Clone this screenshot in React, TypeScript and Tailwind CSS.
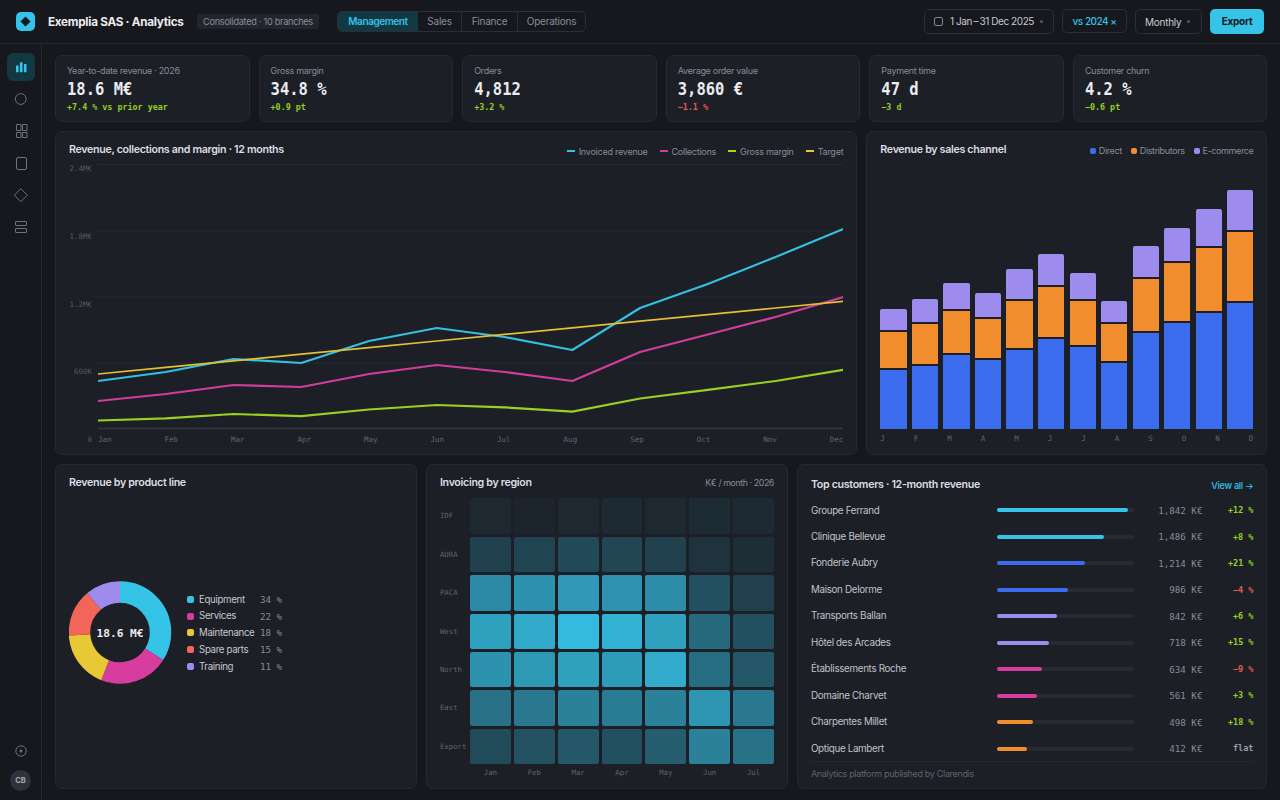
import type { ReactNode } from "react";

const sans = "whitespace-nowrap leading-none";
const mono = "font-['DejaVu_Sans_Mono',monospace] whitespace-nowrap leading-none";

const kpis = [
    { label: "Year-to-date revenue · 2026", value: "18.6 M€", delta: "+7.4 % vs prior year", up: true },
    { label: "Gross margin", value: "34.8 %", delta: "+0.9 pt", up: true },
    { label: "Orders", value: "4,812", delta: "+3.2 %", up: true },
    { label: "Average order value", value: "3,860 €", delta: "−1.1 %", up: false },
    { label: "Payment time", value: "47 d", delta: "−3 d", up: true },
    { label: "Customer churn", value: "4.2 %", delta: "−0.6 pt", up: true },
];

const months = ["Jan", "Feb", "Mar", "Apr", "May", "Jun", "Jul", "Aug", "Sep", "Oct", "Nov", "Dec"];

const series = [
    { name: "Invoiced revenue", color: "#35bfe0", dot: "bg-[#35c3e8]", width: 2.2, values: [48, 57, 70, 66, 88, 101, 92, 79, 121, 145, 172, 200] },
    { name: "Collections", color: "#d03d9b", dot: "bg-[#d63d9f]", width: 2.2, values: [28, 35, 44, 42, 55, 64, 57, 48, 77, 94.5, 112, 132] },
    { name: "Gross margin", color: "#9bcf24", dot: "bg-[#9ed81f]", width: 2.2, values: [8.5, 10.7, 15, 12.8, 19.5, 24, 21.7, 17.3, 30.5, 39.2, 48, 59.2] },
    { name: "Target", color: "#e2bf35", dot: "bg-[#e8c835]", width: 1.7, values: [55, 61.6, 68.2, 74.8, 81.4, 88, 94.6, 101.2, 107.8, 114.4, 121, 127.6] },
];

// [direct, distributors, e-commerce]
const channels = [
    [59.7, 38.3, 21.7],
    [64.3, 41.7, 24],
    [74.7, 44, 27.3],
    [70, 40.7, 25],
    [80.3, 48.7, 30.7],
    [90.7, 52.3, 31.7],
    [82.7, 46.3, 27],
    [66.7, 39.3, 21.7],
    [96.7, 54, 32],
    [107, 59.7, 34.3],
    [117, 65, 38.3],
    [127.3, 70.7, 40.7],
];

const products = [
    { name: "Equipment", share: 34, color: "#35c3e8", dot: "bg-[#35c3e8]" },
    { name: "Services", share: 22, color: "#d63d9f", dot: "bg-[#d63d9f]" },
    { name: "Maintenance", share: 18, color: "#e8c835", dot: "bg-[#e8c835]" },
    { name: "Spare parts", share: 15, color: "#f26659", dot: "bg-[#f26659]" },
    { name: "Training", share: 11, color: "#9d8cee", dot: "bg-[#9d8cee]" },
];

const regions = [
    { name: "IDF", values: [0.06, 0.04, 0.06, 0.07, 0.06, 0.08, 0.07] },
    { name: "AURA", values: [0.21, 0.23, 0.26, 0.24, 0.21, 0.12, 0.09] },
    { name: "PACA", values: [0.66, 0.7, 0.75, 0.71, 0.67, 0.3, 0.2] },
    { name: "West", values: [0.79, 0.85, 0.95, 0.9, 0.79, 0.45, 0.3] },
    { name: "North", values: [0.7, 0.74, 0.79, 0.76, 0.86, 0.48, 0.34] },
    { name: "East", values: [0.5, 0.54, 0.6, 0.57, 0.6, 0.72, 0.54] },
    { name: "Export", values: [0.27, 0.31, 0.34, 0.3, 0.38, 0.6, 0.5] },
];

const customers = [
    { name: "Groupe Ferrand", fill: 96, bar: "bg-[#35c3e8]", value: "1,842 K€", delta: "+12 %" },
    { name: "Clinique Bellevue", fill: 78, bar: "bg-[#35c3e8]", value: "1,486 K€", delta: "+8 %" },
    { name: "Fonderie Aubry", fill: 64, bar: "bg-[#3b6cee]", value: "1,214 K€", delta: "+21 %" },
    { name: "Maison Delorme", fill: 52, bar: "bg-[#3b6cee]", value: "986 K€", delta: "−4 %" },
    { name: "Transports Ballan", fill: 44, bar: "bg-[#9d8cee]", value: "842 K€", delta: "+6 %" },
    { name: "Hôtel des Arcades", fill: 38, bar: "bg-[#9d8cee]", value: "718 K€", delta: "+15 %" },
    { name: "Établissements Roche", fill: 33, bar: "bg-[#d63d9f]", value: "634 K€", delta: "−9 %" },
    { name: "Domaine Charvet", fill: 29, bar: "bg-[#d63d9f]", value: "561 K€", delta: "+3 %" },
    { name: "Charpentes Millet", fill: 26, bar: "bg-[#f18d2d]", value: "498 K€", delta: "+18 %" },
    { name: "Optique Lambert", fill: 22, bar: "bg-[#f18d2d]", value: "412 K€", delta: "flat" },
];

function deltaColor(delta: string) {
    if (delta.startsWith("+")) return "text-[#93cf22]";
    if (delta.startsWith("−")) return "text-[#e8594f]";
    return "text-[#9a9ca5]";
}

function Card({ className, children }: { className: string; children: ReactNode }) {
    return (
        <section className={`min-w-0 rounded-[7px] border border-[#262932] bg-[#1c1f26] ${className}`}>
            {children}
        </section>
    );
}

function Title({ children }: { children: ReactNode }) {
    return <h2 className={`${sans} text-[10.7px] font-semibold tracking-[-0.33px] text-[#dcdde2]`}>{children}</h2>;
}

function Header() {
    return (
        <header className="flex h-11 shrink-0 items-center border-b border-[#26282f] px-4 pb-px">
            <div className="flex h-[19px] w-[19px] items-center justify-center rounded-[5px] bg-[#35c3e8]">
                <svg className="h-[11px] w-[11px]" viewBox="0 0 11 11">
                    <path d="M5.5 0.5L10.5 5.5L5.5 10.5L0.5 5.5Z" fill="#15171c" />
                </svg>
            </div>
            <h1 className={`${sans} ml-[13px] w-[137px] pt-[3px] text-[11.7px] font-bold tracking-[-0.26px] text-[#ececf0]`}>Exemplia SAS · Analytics</h1>
            <div className="ml-3 flex h-[15px] w-[122px] items-center justify-center rounded-[3px] bg-[#22252d] pt-px">
                <span className={`${sans} text-[9.2px] tracking-[-0.3px] text-[#898c96]`}>Consolidated · 10 branches</span>
            </div>
            <nav className="ml-[18px] flex h-[21px] overflow-hidden rounded-[5px] border border-[#2b2e36] text-[10px] tracking-[-0.25px] text-[#898c96]">
                <span className={`${sans} flex w-20 items-center justify-center bg-[#123842] font-semibold tracking-[-0.42px] text-[#35c3e8]`}>Management</span>
                <span className={`${sans} flex w-[43px] items-center justify-center`}>Sales</span>
                <span className={`${sans} flex w-14 items-center justify-center border-l border-[#2b2e36]`}>Finance</span>
                <span className={`${sans} flex w-[68px] items-center justify-center border-l border-[#2b2e36]`}>Operations</span>
            </nav>
            <div className="ml-auto flex items-center gap-2 text-[10px] tracking-[-0.25px] text-[#c6c8cf]">
                <div className="flex h-[25px] w-[130px] items-center rounded-[5px] border border-[#2b2e36] pl-[9px]">
                    <span className="h-[9px] w-[9px] rounded-[2px] border border-[#85878f]" />
                    <span className={`${sans} ml-[7px] w-[85px] tracking-[-0.42px]`}>{"1 Jan\u2009–\u200931 Dec 2025"}</span>
                    <span className="ml-[5px] h-[3px] w-[3px] rounded-full bg-[#565963]" />
                </div>
                <div className={`${sans} flex h-6 w-[65px] items-center justify-center rounded-[5px] border border-[#2b2e36] font-medium tracking-[-0.5px] text-[#35c3e8]`}>vs 2024 ×</div>
                <div className="flex h-[25px] w-[67px] items-center rounded-[5px] border border-[#2b2e36] pl-[9px]">
                    <span className={`${sans} pt-px`}>Monthly</span>
                    <span className="ml-[6px] h-[3px] w-[3px] rounded-full bg-[#565963]" />
                </div>
                <button className={`${sans} h-[25px] w-[54px] rounded-[5px] bg-[#35c3e8] font-bold text-[#10161b]`}>Export</button>
            </div>
        </header>
    );
}

function Sidebar() {
    return (
        <aside className="flex w-[42px] shrink-0 flex-col items-center border-r border-[#26282f] pt-[9px] pb-[9px]">
            <div className="flex h-7 w-7 items-center justify-center rounded-md bg-[#123842]">
                <svg className="h-3 w-3" viewBox="0 0 12 12" fill="#35c3e8">
                    <path d="M1 4.5h2.6v6.7H1zM4.9 1.2h2.6v10H4.9zM8.9 3h2.6v8.2H8.9z" />
                </svg>
            </div>
            <svg className="mt-1 h-40 w-7" viewBox="0 0 28 160" fill="none" stroke="#6e717a" strokeWidth="1">
                <circle cx="13.8" cy="14" r="5.4" />
                <path d="M9.5 39.5h4.5v6h-4.5zM15.5 39.5h4.5v6h-4.5zM9.5 47.5h4.5v5h-4.5zM15.5 47.5h4.5v5h-4.5z" />
                <rect x="9.5" y="72.5" width="10" height="12" rx="1.5" />
                <path d="M13.8 103.7l6.5 6.5l-6.5 6.5l-6.5 -6.5z" />
                <rect x="8.5" y="136.5" width="11" height="4" rx="0.5" />
                <rect x="8.5" y="143.5" width="11" height="4" rx="0.5" />
            </svg>
            <svg className="mt-auto h-3 w-3" viewBox="0 0 12 12" fill="none" stroke="#6e717a">
                <circle cx="6" cy="6" r="5.2" />
                <circle cx="6" cy="6" r="1.5" fill="#6e717a" stroke="none" />
            </svg>
            <div className={`${sans} mt-[13px] flex h-[21px] w-[21px] items-center justify-center rounded-full bg-[#2f323a] text-[7.5px] font-bold text-[#a6a8b0]`}>CB</div>
        </aside>
    );
}

function TrendCard() {
    return (
        <Card className="flex flex-col px-[13px] pt-[13px]">
            <div className="flex h-[14px] justify-between">
                <Title>Revenue, collections and margin · 12 months</Title>
                <div className="flex items-start gap-3 pt-px">
                    {series.map((s) => (
                        <div key={s.name} className="flex h-[10px] items-center gap-1">
                            <span className={`h-[2px] w-2 ${s.dot}`} />
                            <span className={`${sans} text-[9px] tracking-[-0.25px] text-[#898c96]`}>{s.name}</span>
                        </div>
                    ))}
                </div>
            </div>
            <div className="mt-[5px] flex h-[281px]">
                <div className={`${mono} flex w-[23px] flex-col justify-between text-right text-[7.5px] text-[#565963]`}>
                    {["2.4M€", "1.8M€", "1.2M€", "600K", "0"].map((t) => (
                        <span key={t} className="h-[10px] leading-[10px]">{t}</span>
                    ))}
                </div>
                <div className="ml-[6px] flex flex-1 flex-col">
                    <svg className="h-[266px] w-full" viewBox="0 0 745 266" preserveAspectRatio="none" fill="none">
                        <path d="M0 0.5H745M0 67H745M0 133H745M0 199H745" stroke="#262932" />
                        <path d="M0 264.5H745" stroke="#343740" strokeWidth="1.5" />
                        {series.map((s) => (
                            <polyline
                                key={s.name}
                                points={s.values.map((v, i) => `${(i * 745) / 11},${265 - v}`).join(" ")}
                                stroke={s.color}
                                strokeWidth={s.width}
                                strokeLinejoin="round"
                            />
                        ))}
                    </svg>
                    <div className={`${mono} mt-[5px] flex justify-between text-[7.5px] text-[#62656f]`}>
                        {months.map((m) => (
                            <span key={m} className="leading-[10px]">{m}</span>
                        ))}
                    </div>
                </div>
            </div>
        </Card>
    );
}

function ChannelCard() {
    return (
        <Card className="flex flex-col px-[13px] pt-[13px]">
            <div className="flex h-[11px] items-start justify-between">
                <Title>Revenue by sales channel</Title>
                <div className="mt-px flex gap-[9px]">
                    {[
                        { name: "Direct", dot: "bg-[#3b6cee]" },
                        { name: "Distributors", dot: "bg-[#f18d2d]" },
                        { name: "E-commerce", dot: "bg-[#9d8cee]" },
                    ].map((c) => (
                        <div key={c.name} className="flex items-center gap-[3px]">
                            <span className={`h-1.5 w-1.5 rounded-[2px] ${c.dot}`} />
                            <span className={`${sans} text-[9px] tracking-[-0.38px] text-[#898c96]`}>{c.name}</span>
                        </div>
                    ))}
                </div>
            </div>
            <div className="flex h-[273px] items-end gap-[5.3px]">
                {channels.map(([direct, distributors, ecommerce], i) => (
                    <div key={i} className="flex flex-1 flex-col">
                        <div className="rounded-t-[2px] border-b border-[#1c1f26] bg-[#9d8cee]" style={{ height: ecommerce }} />
                        <div className="border-y border-[#1c1f26] bg-[#f18d2d]" style={{ height: distributors }} />
                        <div className="border-t border-[#1c1f26] bg-[#3b6cee]" style={{ height: direct }} />
                    </div>
                ))}
            </div>
            <div className={`${mono} mt-[5px] flex justify-between text-[7.5px] text-[#62656f]`}>
                {months.map((m) => (
                    <span key={m} className="leading-[10px]">{m[0]}</span>
                ))}
            </div>
        </Card>
    );
}

function ProductCard() {
    const r = 40.5;
    const total = 2 * Math.PI * r;
    let start = 0;
    return (
        <Card className="flex flex-col px-[13px] pt-[13px]">
            <Title>Revenue by product line</Title>
            <div className="mt-[92.5px] flex items-center">
                <svg className="h-[103px] w-[103px]" viewBox="0 0 103 103" fill="none">
                    {products.map((p) => {
                        const offset = start;
                        start += p.share;
                        return (
                            <circle
                                key={p.name}
                                cx="51"
                                cy="51.5"
                                r={r}
                                stroke={p.color}
                                strokeWidth="21.5"
                                strokeDasharray={`${(p.share / 100) * total} ${total}`}
                                transform={`rotate(${offset * 3.6 - 90} 51 51.5)`}
                            />
                        );
                    })}
                    <text
                        x="51"
                        y="55.5"
                        textAnchor="middle"
                        fill="#ececf0"
                        className="font-['DejaVu_Sans_Mono',monospace] text-[11.2px] font-bold"
                    >
                        18.6 M€
                    </text>
                </svg>
                <div className="ml-[15px] flex flex-col">
                    {products.map((p) => (
                        <div key={p.name} className="flex h-[16.8px] items-center">
                            <span className={`h-[7px] w-[7px] rounded-[2px] ${p.dot}`} />
                            <span className={`${sans} ml-[5px] w-[61px] text-[9.7px] tracking-[-0.33px] text-[#c6c8cf]`}>{p.name}</span>
                            <span className={`${mono} text-[9.2px] text-[#898c96]`}>{p.share} %</span>
                        </div>
                    ))}
                </div>
            </div>
        </Card>
    );
}

function RegionCard() {
    return (
        <Card className="flex flex-col px-[13px] pt-[13px]">
            <div className="flex h-[11px] items-center justify-between">
                <Title>Invoicing by region</Title>
                <span className={`${sans} text-[8.8px] tracking-[-0.4px] text-[#898c96]`}>K€ / month · 2026</span>
            </div>
            <div className="mt-[9px] flex h-[266px] flex-col gap-[3px]">
                {regions.map((region) => (
                    <div key={region.name} className="grid flex-1 grid-cols-[27px_repeat(7,minmax(0,1fr))] items-stretch gap-[3px]">
                        <span className={`${mono} self-center text-[7.3px] text-[#62656f]`}>{region.name}</span>
                        {region.values.map((v, i) => (
                            <div key={i} className="rounded-[2px] bg-[#35c3e8]" style={{ opacity: v }} />
                        ))}
                    </div>
                ))}
            </div>
            <div className={`${mono} mt-1 grid grid-cols-[27px_repeat(7,minmax(0,1fr))] gap-[3px] text-center text-[7.3px] text-[#62656f]`}>
                <span />
                {months.slice(0, 7).map((m) => (
                    <span key={m} className="leading-[10px]">{m}</span>
                ))}
            </div>
        </Card>
    );
}

function CustomerCard() {
    return (
        <Card className="flex flex-col px-[13px] pt-[13px]">
            <div className="flex h-[13px] items-center justify-between pt-px">
                <Title>Top customers · 12-month revenue</Title>
                <span className={`${sans} text-[9.2px] font-medium tracking-[-0.3px] text-[#35c3e8]`}>View all →</span>
            </div>
            <div className="mt-[6px] flex h-[264.5px] flex-col">
                {customers.map((c) => (
                    <div key={c.name} className="flex flex-1 items-center">
                        <span className={`${sans} w-[186.5px] text-[9.8px] tracking-[-0.32px] text-[#c0c2ca]`}>{c.name}</span>
                        <div className="h-1 w-[136.5px] rounded-full bg-[#272a31]">
                            <div className={`h-1 rounded-full ${c.bar}`} style={{ width: `${c.fill}%` }} />
                        </div>
                        <span className={`${mono} w-[68.5px] text-right text-[9.2px] text-[#898c96]`}>{c.value}</span>
                        <span className={`${mono} flex-1 text-right text-[8.5px] font-bold ${deltaColor(c.delta)}`}>
                            {c.delta}
                        </span>
                    </div>
                ))}
            </div>
            <div className="-mt-px border-t border-[#262932] pt-[7px]">
                <span className={`${sans} block text-[9px] tracking-[-0.33px] text-[#5f626c]`}>Analytics platform published by Clarendis</span>
            </div>
        </Card>
    );
}

export default function App() {
    return (
        <div className="flex h-screen w-full flex-col overflow-hidden bg-[#17181d] font-[Inter,sans-serif]">
            <Header />
            <div className="flex min-h-0 flex-1">
                <Sidebar />
                <main className="flex min-w-0 flex-1 flex-col gap-[9px] pt-[11px] pr-[12.5px] pb-[11.5px] pl-[13px]">
                    <div className="grid h-[67px] shrink-0 grid-cols-6 gap-[9px]">
                        {kpis.map((k) => (
                            <Card key={k.label} className="flex flex-col px-[11px] pt-[10px]">
                                <span className={`${sans} text-[9px] tracking-[-0.3px] text-[#898c96]`}>{k.label}</span>
                                <span className={`${mono} mt-2 origin-center scale-y-[1.1] text-[15.5px] font-bold text-[#ececf0]`}>{k.value}</span>
                                <span className={`${mono} mt-1 text-[8.4px] font-bold ${k.up ? "text-[#93cf22]" : "text-[#e8594f]"}`}>{k.delta}</span>
                            </Card>
                        ))}
                    </div>
                    <div className="grid min-h-0 flex-1 grid-cols-[2fr_1fr] gap-[9px]">
                        <TrendCard />
                        <ChannelCard />
                    </div>
                    <div className="grid min-h-0 flex-1 grid-cols-[1fr_1fr_1.3fr] gap-[9px]">
                        <ProductCard />
                        <RegionCard />
                        <CustomerCard />
                    </div>
                </main>
            </div>
        </div>
    );
}
